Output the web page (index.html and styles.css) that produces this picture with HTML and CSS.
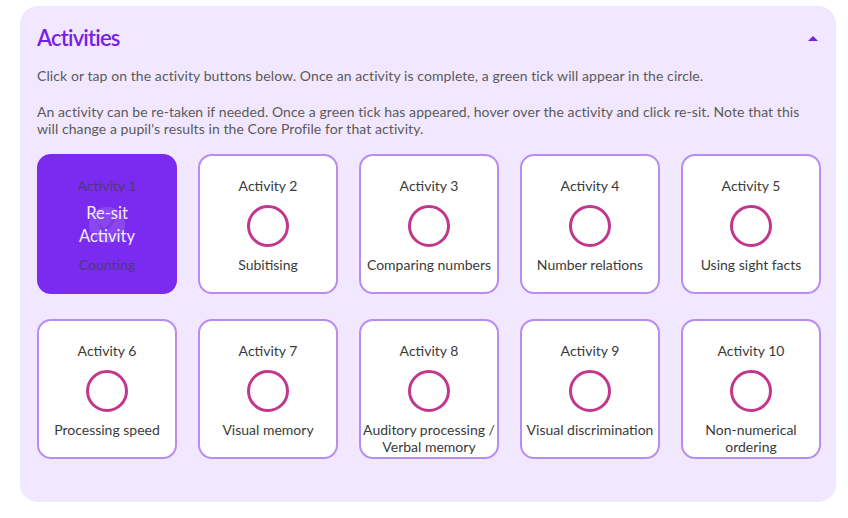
FILE: index.html
```html
<!DOCTYPE html>
<html>
<head>
<meta charset="utf-8">
<link rel="stylesheet" href="styles.css">
</head>
<body>
<section class="panel">
  <header class="panel-head">
    <h2 class="title">Activities</h2>
    <span class="caret"></span>
  </header>
  <p class="intro">Click or tap on the activity buttons below. Once an activity is complete, a green tick will appear in the circle.</p>
  <p class="intro last">An activity can be re-taken if needed. Once a green tick has appeared, hover over the activity and click re-sit. Note that this will change a pupil's results in the Core Profile for that activity.</p>
  <div class="grid">
    <div class="card active">
      <div class="num">Activity 1</div>
      <div class="resit">
        <svg class="ghost" viewBox="0 0 42 42" width="42" height="42"><circle cx="21" cy="21" r="18" fill="#8e4ff0"/><path d="M13 21 L19 27 L29 15" fill="none" stroke="#7a3fe0" stroke-width="3"/></svg>
        <span>Re-sit<br>Activity</span>
      </div>
      <div class="name">Counting</div>
    </div>
    <div class="card"><div class="num">Activity 2</div><span class="ring"></span><div class="name">Subitising</div></div>
    <div class="card"><div class="num">Activity 3</div><span class="ring"></span><div class="name">Comparing numbers</div></div>
    <div class="card"><div class="num">Activity 4</div><span class="ring"></span><div class="name">Number relations</div></div>
    <div class="card"><div class="num">Activity 5</div><span class="ring"></span><div class="name">Using sight facts</div></div>
    <div class="card"><div class="num">Activity 6</div><span class="ring"></span><div class="name">Processing speed</div></div>
    <div class="card"><div class="num">Activity 7</div><span class="ring"></span><div class="name">Visual memory</div></div>
    <div class="card"><div class="num">Activity 8</div><span class="ring"></span><div class="name">Auditory processing /<br>Verbal memory</div></div>
    <div class="card"><div class="num">Activity 9</div><span class="ring"></span><div class="name">Visual discrimination</div></div>
    <div class="card"><div class="num">Activity 10</div><span class="ring"></span><div class="name">Non-numerical ordering</div></div>
  </div>
</section>
</body>
</html>
```
FILE: styles.css
```css
html, body {
  margin: 0;
  padding: 0;
  background: #ffffff;
}
body {
  padding: 6px 12px 0 20px;
  font-family: Lato, "Open Sans", sans-serif;
  color: #555555;
}
.panel {
  width: 816px;
  height: 496px;
  box-sizing: border-box;
  background: #f1e8ff;
  border-radius: 18px;
  padding: 18px 16px 0 17px;
}
.panel-head {
  display: flex;
  align-items: center;
  justify-content: space-between;
  height: 26px;
  margin-bottom: 17px;
}
.title {
  margin: 0;
  font-size: 22px;
  font-weight: 600;
  color: #7a1de6;
  letter-spacing: -0.8px;
}
.caret {
  width: 0;
  height: 0;
  border-left: 5px solid transparent;
  border-right: 5px solid transparent;
  border-bottom: 5px solid #7a1de6;
  margin-right: 2px;
  margin-top: 2px;
}
.intro {
  margin: 0 0 19px 0;
  font-size: 14px;
  line-height: 17px;
  letter-spacing: 0.08px;
  color: #5a5a5a;
}
.intro.last {
  margin-bottom: 17px;
}
.grid {
  display: grid;
  grid-template-columns: repeat(5, 140px);
  grid-auto-rows: 140px;
  column-gap: 21px;
  row-gap: 25px;
}
.card {
  box-sizing: border-box;
  background: #ffffff;
  border: 2px solid #b98cf3;
  border-radius: 14px;
  display: flex;
  flex-direction: column;
  align-items: center;
  padding-top: 21px;
  text-align: center;
  font-size: 14px;
  color: #3a3a3a;
}
.num {
  line-height: 17px;
  height: 17px;
}
.ring {
  display: block;
  width: 42px;
  height: 42px;
  box-sizing: border-box;
  border: 3.5px solid #c2378c;
  border-radius: 50%;
  margin: 11px 0 9px 0;
}
.name {
  line-height: 17px;
  padding: 0 2px;
}
.card.active {
  background: #7b2bf0;
  border-color: #7b2bf0;
  color: #4d3a78;
}
.resit {
  position: relative;
  height: 62px;
  width: 100%;
  display: flex;
  align-items: center;
  justify-content: center;
}
.ghost {
  position: absolute;
  left: 50%;
  top: 50%;
  transform: translate(-50%, -50%);
  opacity: 0.8;
}
.resit span {
  position: relative;
  color: #f4eefe;
  font-size: 16.5px;
  line-height: 23px;
}
```
